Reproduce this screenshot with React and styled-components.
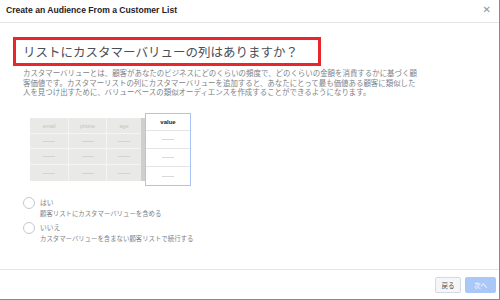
import React from 'react';
import styled, { createGlobalStyle } from 'styled-components';

const GlobalStyle = createGlobalStyle`
    html, body {
        margin: 0;
        padding: 0;
        background: #fff;
    }
    * {
        box-sizing: border-box;
    }
`;

const JP = `"Noto Sans CJK JP", "Noto Sans", sans-serif`;

const Dialog = styled.div`
    width: 500px;
    height: 300px;
    display: flex;
    flex-direction: column;
    background: #fff;
    border-right: 1px solid #8a8a8a;
    border-bottom: 1px solid #8a8a8a;
    overflow: hidden;
`;

const Header = styled.div`
    height: 23px;
    flex: none;
    display: flex;
    align-items: center;
    justify-content: space-between;
    padding: 0 8px 2px 6px;
    border-bottom: 1px solid #e5e5e5;
`;

const HeaderTitle = styled.div`
    font-family: "Liberation Sans", Arial, sans-serif;
    font-size: 8.6px;
    font-weight: bold;
    color: #1d2129;
`;

const Close = styled.div`
    font-family: "DejaVu Sans", sans-serif;
    font-size: 10px;
    color: #8d949e;
    line-height: 1;
`;

const Body = styled.div`
    flex: 1;
    padding: 14px 13px 0;
    display: flex;
    flex-direction: column;
`;

const Question = styled.div`
    width: 308px;
    height: 29px;
    border: 3px solid #e8262e;
    padding-left: 7px;
    display: flex;
    align-items: center;
    font-family: ${JP};
    font-size: 12.5px;
    color: #4b4f56;
    white-space: nowrap;
`;

const Description = styled.div`
    margin-top: 2px;
    padding-left: 10px;
    font-family: ${JP};
    font-size: 7.45px;
    line-height: 9.7px;
    color: #7d8187;
    white-space: nowrap;
`;

const Line = styled.span`
    display: block;
`;

const Figure = styled.div`
    margin: 16px 0 0 17px;
    display: flex;
    align-items: center;
`;

const GrayTable = styled.div`
    display: grid;
    grid-template-columns: 39px 38px 34px;
    grid-template-rows: 16px 15px 16px 16px;
    background: #e9e9e7;
    border-right: 4px solid #cfcfcd;
`;

const GrayCell = styled.div`
    display: flex;
    align-items: center;
    justify-content: center;
    border-right: ${p => (p.$last ? 'none' : '1px solid #f4f4f3')};
    border-bottom: ${p => (p.$bottom ? 'none' : '1px solid #f4f4f3')};
    font-family: "Liberation Sans", Arial, sans-serif;
    font-size: 5.5px;
    color: #c4c4c2;
`;

const Dash = styled.span`
    width: 12px;
    height: 1px;
    background: ${p => p.$color || '#d3d3d1'};
`;

const ValueColumn = styled.div`
    width: 46px;
    border: 1px solid #a9c4f6;
    background: #fff;
    display: flex;
    flex-direction: column;
`;

const ValueCell = styled.div`
    height: ${p => (p.$head ? '17px' : '18px')};
    display: flex;
    align-items: center;
    justify-content: center;
    border-bottom: ${p => (p.$bottom ? 'none' : '1px solid #e4e4e4')};
    font-family: "Liberation Sans", Arial, sans-serif;
    font-size: 6px;
    font-weight: ${p => (p.$head ? 'bold' : 'normal')};
    color: #1d2129;
`;

const Options = styled.div`
    margin: 11px 0 0 10px;
    display: flex;
    flex-direction: column;
    gap: 3px;
`;

const Option = styled.div`
    display: flex;
    align-items: flex-start;
    gap: 5px;
`;

const Radio = styled.span`
    width: 12px;
    height: 12px;
    border-radius: 50%;
    border: 1px solid #c4c8ce;
    flex: none;
`;

const OptionText = styled.div`
    font-family: ${JP};
    color: #7d8187;
    line-height: 11px;
`;

const OptionLabel = styled.div`
    font-size: 6.8px;
`;

const OptionSub = styled.div`
    font-size: 6.4px;
`;

const Footer = styled.div`
    height: 30px;
    flex: none;
    border-top: 1px solid #e5e5e5;
    display: flex;
    align-items: center;
    justify-content: flex-end;
    gap: 4px;
    padding: 0 3px 0 0;
`;

const Button = styled.div`
    height: 16px;
    width: ${p => p.$width}px;
    display: flex;
    align-items: center;
    justify-content: center;
    border-radius: 2px;
    font-family: ${JP};
    font-size: 6.5px;
    color: ${p => (p.$primary ? '#fff' : '#4b4f56')};
    background: ${p => (p.$primary ? '#a9c8f7' : '#f5f6f7')};
    border: 1px solid ${p => (p.$primary ? '#a9c8f7' : '#d6d9dd')};
`;

const columns = ['email', 'phone', 'age'];

export default function App() {
    return (
        <>
            <GlobalStyle />
            <Dialog>
                <Header>
                    <HeaderTitle>Create an Audience From a Customer List</HeaderTitle>
                    <Close>✕</Close>
                </Header>
                <Body>
                    <Question>リストにカスタマーバリューの列はありますか？</Question>
                    <Description>
                        <Line>カスタマーバリューとは、顧客があなたのビジネスにどのくらいの頻度で、どのくらいの金額を消費するかに基づく顧</Line>
                        <Line>客価値です。カスタマーリストの列にカスタマーバリューを追加すると、あなたにとって最も価値ある顧客に類似した</Line>
                        <Line>人を見つけ出すために、バリューベースの類似オーディエンスを作成することができるようになります。</Line>
                    </Description>
                    <Figure>
                        <GrayTable>
                            {[0, 1, 2, 3].map(row =>
                                columns.map((col, i) => (
                                    <GrayCell key={`${row}-${col}`} $last={i === 2} $bottom={row === 3}>
                                        {row === 0 ? col : <Dash />}
                                    </GrayCell>
                                ))
                            )}
                        </GrayTable>
                        <ValueColumn>
                            <ValueCell $head>value</ValueCell>
                            <ValueCell><Dash $color="#d8d8d8" /></ValueCell>
                            <ValueCell><Dash $color="#d8d8d8" /></ValueCell>
                            <ValueCell $bottom><Dash $color="#d8d8d8" /></ValueCell>
                        </ValueColumn>
                    </Figure>
                    <Options>
                        <Option>
                            <Radio />
                            <OptionText>
                                <OptionLabel>はい</OptionLabel>
                                <OptionSub>顧客リストにカスタマーバリューを含める</OptionSub>
                            </OptionText>
                        </Option>
                        <Option>
                            <Radio />
                            <OptionText>
                                <OptionLabel>いいえ</OptionLabel>
                                <OptionSub>カスタマーバリューを含まない顧客リストで続行する</OptionSub>
                            </OptionText>
                        </Option>
                    </Options>
                </Body>
                <Footer>
                    <Button $width={26}>戻る</Button>
                    <Button $width={31} $primary>次へ</Button>
                </Footer>
            </Dialog>
        </>
    );
}
